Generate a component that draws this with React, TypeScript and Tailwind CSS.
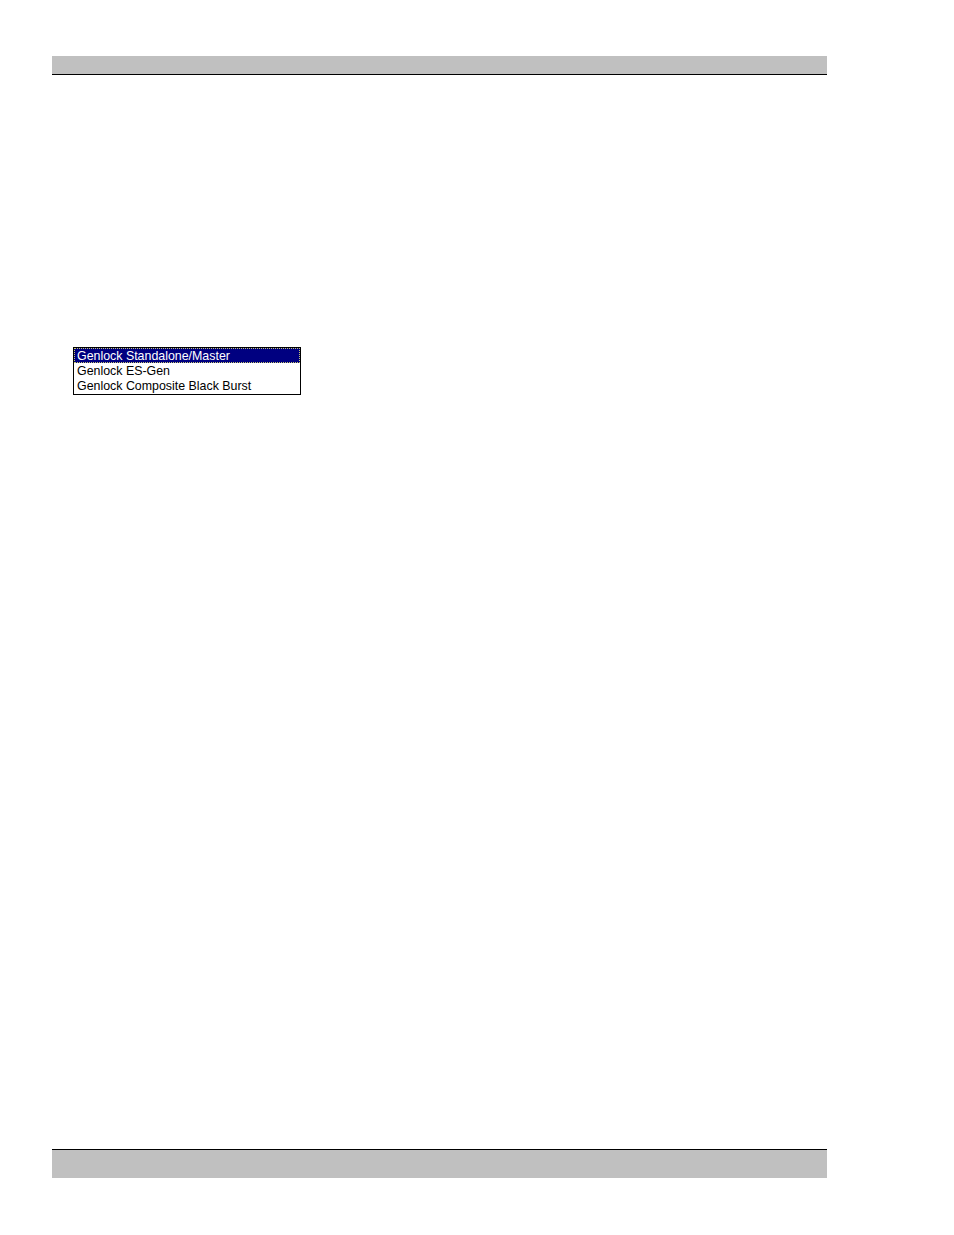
import React from "react";

export default function App() {
  const items = [
    "Genlock Standalone/Master",
    "Genlock ES-Gen",
    "Genlock Composite Black Burst",
  ];
  return (
    <div className="flex flex-col h-[1235px] w-[954px] bg-white" style={{ fontFamily: '"Liberation Sans", Arial, sans-serif' }}>
      <div className="mt-[56px] ml-[52px] w-[775px] h-[18px] bg-[#c0c0c0] border-b border-black box-content" />
      <div className="mt-[272px] ml-[73px] w-[228px] border border-black bg-white flex flex-col pb-[1px]">
        {items.map((t, i) => (
          <div
            key={t}
            className={
              i === 0
                ? "h-[15px] leading-[16px] pl-[3px] text-[12.4px] text-white bg-[#000080] outline-1 outline-dotted outline-[#c8c870] -outline-offset-1"
                : "h-[15px] leading-[16px] pl-[3px] text-[12.4px] text-black"
            }
          >
            {t}
          </div>
        ))}
      </div>
      <div className="mt-auto mb-[57px] ml-[52px] w-[775px] h-[28px] bg-[#c0c0c0] border-t border-black box-content" />
    </div>
  );
}
